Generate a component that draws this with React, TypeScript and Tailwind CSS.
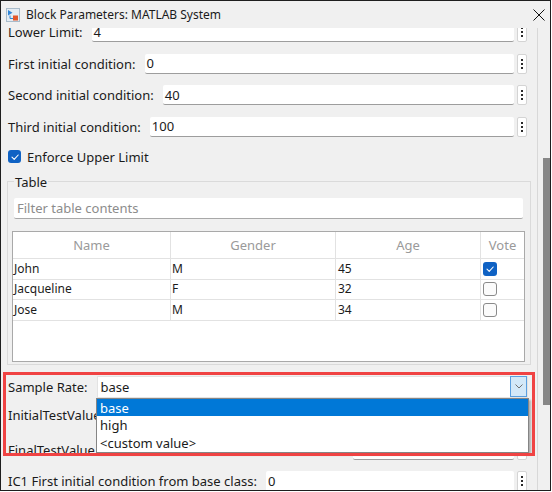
import type { ReactNode } from "react"

const people = [
  { name: "John", gender: "M", age: "45", vote: true, h: "h-[21px]" },
  { name: "Jacqueline", gender: "F", age: "32", vote: false, h: "h-[20px]" },
  { name: "Jose", gender: "M", age: "34", vote: false, h: "h-[21px]" },
]

function MoreButton() {
  return (
    <div className="ml-[3px] flex h-full w-[10px] shrink-0 flex-col items-center justify-center gap-[2px] rounded-[2px] border border-[#d4d4d4] bg-white">
      <span className="h-[2px] w-[2px] bg-[#2a2a2a]" />
      <span className="h-[2px] w-[2px] bg-[#2a2a2a]" />
      <span className="h-[2px] w-[2px] bg-[#2a2a2a]" />
    </div>
  )
}

function Field({ label, value, className = "" }: { label: ReactNode; value?: string; className?: string }) {
  return (
    <div className={`flex h-[20px] shrink-0 items-center ${className}`}>
      <span className="shrink-0 whitespace-nowrap">{label}</span>
      <div className="ml-[9px] flex h-full min-w-0 flex-1 items-center rounded-[2px] border-b border-[#9d9d9d] bg-white pl-[2px]">
        {value}
      </div>
      <MoreButton />
    </div>
  )
}

function Check({ checked, size = "h-[14px] w-[14px]" }: { checked: boolean; size?: string }) {
  if (!checked) {
    return <span className={`${size} block rounded-[3px] border border-[#8a8a8a] bg-[#fbfbfb]`} />
  }
  return (
    <span className={`${size} flex items-center justify-center rounded-[3px] bg-[#0f62c4]`}>
      <svg width="10" height="10" viewBox="0 0 10 10" fill="none">
        <path d="M2 5.2 L4.2 7.3 L8.2 3" stroke="white" strokeWidth="1.1" strokeLinecap="round" strokeLinejoin="round" />
      </svg>
    </span>
  )
}

export default function App() {
  return (
    <div className="h-[492px] w-[552px] bg-white font-['Noto_Sans',sans-serif] text-[13px] leading-[18px] text-[#1b1b1b]">
      <div className="relative flex h-[491px] w-[551px] flex-col overflow-hidden border border-[#1e1e1e] bg-[#f0f0f0]">
        {/* title bar */}
        <div className="flex h-[27px] shrink-0 items-center pl-[5px] pr-[5px]">
          <svg width="14" height="14" viewBox="0 0 14 14" className="shrink-0">
            <rect x="0.5" y="0.5" width="13" height="13" fill="#e4ecf3" stroke="#a9bccb" />
            <polygon points="2,2 2,7.5 6.5,4.75" fill="#2f86d8" />
            <path d="M4 7.5 V10.5 H7" stroke="#2f86d8" strokeWidth="1" fill="none" />
            <rect x="7" y="7.5" width="5" height="5" fill="#e2572b" />
          </svg>
          <span className="ml-[6px] whitespace-nowrap text-[12px]">Block Parameters: MATLAB System</span>
          <div className="flex-1" />
          <svg width="12" height="12" viewBox="0 0 12 12">
            <path d="M0.5 0.5 L11.5 11.5 M11.5 0.5 L0.5 11.5" stroke="#111" strokeWidth="1" />
          </svg>
        </div>

        <div className="flex min-h-0 flex-1">
          {/* scrolled content */}
          <div className="min-w-0 flex-1 overflow-hidden">
            <div className="-mt-[6px] flex flex-col pl-[7px] pr-[10px]">
              <div className="flex flex-col gap-[11.5px]">
                <Field label="Lower Limit:" value="4" />
                <Field label="First initial condition:" value="0" />
                <Field label="Second initial condition:" value="40" />
                <Field label="Third initial condition:" value="100" />
              </div>

              <div className="mt-[10px] flex h-[20px] items-center gap-[6px]">
                <Check checked size="h-[13px] w-[13px]" />
                <span>Enforce Upper Limit</span>
              </div>

              <fieldset className="-ml-[1px] mt-[6px] w-[524px] border border-[#dadada] pb-[2px] pl-[6px] pr-[7px]">
                <legend className="px-[1px]">Table</legend>
                <div className="mt-[7px] flex h-[21px] items-center rounded-[2px] border-b border-[#a8a8a8] bg-white pl-[3px] text-[#8c8c8c]">
                  Filter table contents
                </div>
                <div className="-mx-[2px] mt-[12px] h-[131px] border border-[#a9a9a9] bg-white text-[12px]">
                  <div className="grid grid-cols-[158px_165px_145px_1fr]">
                    {["Name", "Gender", "Age", "Vote"].map((h, i) => (
                      <div
                        key={h}
                        className={`flex h-[27px] items-center justify-center border-b border-[#e2e2e2] text-[13px] text-[#9a9a9a] ${
                          i < 3 ? "border-r" : ""
                        }`}
                      >
                        {h}
                      </div>
                    ))}
                    {people.map((p) => (
                      <div key={p.name} className="contents">
                        <div className={`${p.h} flex items-center border-b border-r border-[#e2e2e2] pl-[1px]`}>{p.name}</div>
                        <div className={`${p.h} flex items-center border-b border-r border-[#e2e2e2] pl-[1px]`}>{p.gender}</div>
                        <div className={`${p.h} flex items-center border-b border-r border-[#e2e2e2] pl-[2px]`}>{p.age}</div>
                        <div className={`${p.h} flex items-center border-b border-[#e2e2e2] pl-[2px]`}>
                          <Check checked={p.vote} />
                        </div>
                      </div>
                    ))}
                  </div>
                </div>
              </fieldset>

              {/* sample rate combobox */}
              <div className="-mr-[1px] mt-[11px] flex h-[22px] items-center">
                <span className="shrink-0">Sample Rate:</span>
                <div className="ml-[9px] flex h-full flex-1 items-center border border-[#e3e3e3] bg-white pl-[3px]">
                  <span className="flex-1">base</span>
                  <div className="flex h-[21px] w-[17px] items-center justify-center border border-[#5a9fe0] bg-[#d3e8f8]">
                    <svg width="8" height="5" viewBox="0 0 8 5">
                      <path d="M0.5 0.5 L4 4 L7.5 0.5" stroke="#707070" fill="none" strokeWidth="1" />
                    </svg>
                  </div>
                </div>
              </div>

              <Field className="mt-[7px]" label="InitialTestValue Initial value used for the test signal:" />
              <Field className="mt-[15px]" label="FinalTestValue Final value for waveform with test value:" />
              <Field
                className="mt-[11px] h-[21px]"
                label="IC1 First initial condition from base class:"
                value="0"
              />
            </div>
          </div>

          {/* scrollbar */}
          <div className="relative w-[13px] shrink-0 border-l border-[#d8d8d8] bg-[#f0f0f0]">
            <div className="absolute right-0 top-[130px] h-[247px] w-[7px] bg-[#878787]" />
          </div>
        </div>

        {/* open dropdown list */}
        <div className="absolute left-[95px] top-[397px] flex h-[55px] w-[433px] flex-col border border-[#858585] bg-white shadow-[2px_2px_2px_rgba(0,0,0,0.28)]">
          <div className="flex h-[17px] items-center bg-[#0078d7] pl-[3px] text-white">base</div>
          <div className="flex h-[18px] items-center pl-[3px]">high</div>
          <div className="flex h-[17px] items-center pl-[3px]">&lt;custom value&gt;</div>
        </div>

        {/* highlight annotation */}
        <div className="pointer-events-none absolute left-[2px] top-[371px] h-[84px] w-[532px] border-[3px] border-[#f04343]" />
      </div>
    </div>
  )
}
